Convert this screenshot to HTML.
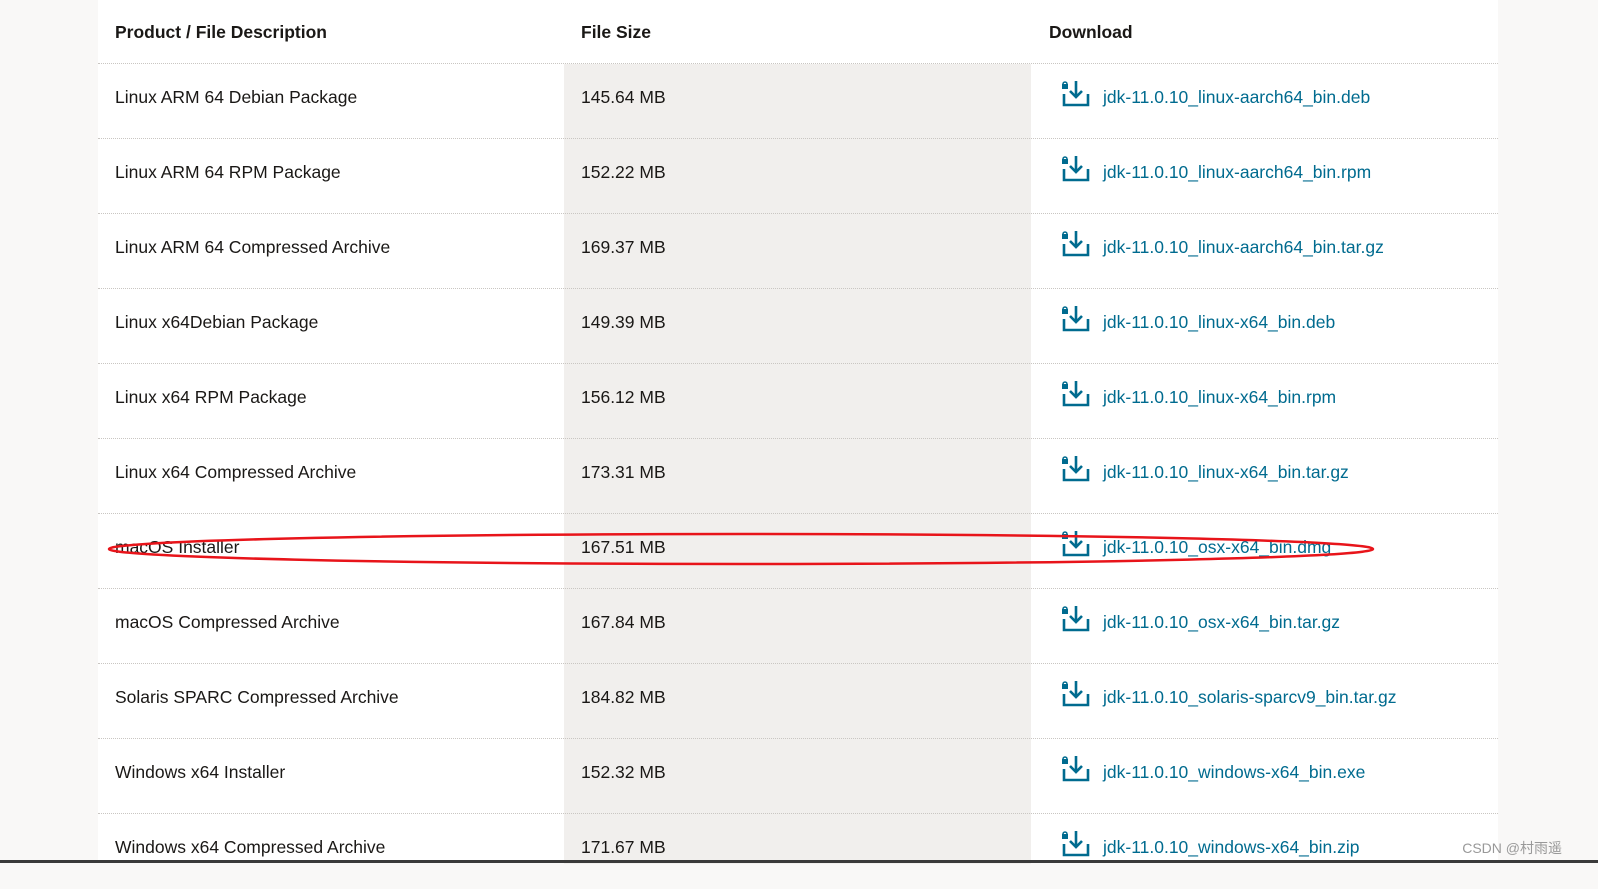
<!DOCTYPE html>
<html><head><meta charset="utf-8"><style>
body{margin:0;width:1598px;height:863px;overflow:hidden;background:#f9f8f7;font-family:"Liberation Sans","Noto Sans CJK SC",sans-serif;position:relative}
.tbl{position:absolute;left:98px;top:0;width:1400px;height:863px;background:#fff}
.mid{position:absolute;left:564px;top:64px;width:467px;height:800px;background:#f1efed}
.hdr{position:absolute;top:1px;height:63px;line-height:63px;font-weight:bold;font-size:17.5px;color:#1a1816}
.row{position:absolute;left:98px;width:1400px;height:75px;border-top:1px dotted #c9c6c2}
.row span{position:absolute;top:2px;line-height:62px;font-size:17.5px;color:#1a1816}
.row .a{left:17px}.row .b{left:483px}
.row .c{left:1005px;color:#006b8f}
.row svg{position:absolute;left:963px;top:16px}
.bar{position:absolute;left:0;top:860px;width:1598px;height:3px;background:#3a3a3a}
.wm{position:absolute;right:36px;top:838px;font-size:14px;color:#999}
</style></head><body>
<div class="tbl"></div><div class="mid"></div>
<div class="hdr" style="left:115px">Product / File Description</div>
<div class="hdr" style="left:581px">File Size</div>
<div class="hdr" style="left:1049px">Download</div>
<div class="row" style="top:63px"><span class="a">Linux ARM 64 Debian Package</span><span class="b">145.64 MB</span><svg width="30" height="30" viewBox="0 0 30 30"><rect x="1" y="4" width="6" height="5" fill="#006b8f"/><path d="M2 4a2 2 0 0 1 4 0" stroke="#006b8f" stroke-width="1.5" fill="none"/><path d="M3 14v11h24v-11M15 1v16M9 11l6 6 6-6" stroke="#006b8f" stroke-width="2.6" fill="none"/></svg><span class="c">jdk-11.0.10_linux-aarch64_bin.deb</span></div>
<div class="row" style="top:138px"><span class="a">Linux ARM 64 RPM Package</span><span class="b">152.22 MB</span><svg width="30" height="30" viewBox="0 0 30 30"><rect x="1" y="4" width="6" height="5" fill="#006b8f"/><path d="M2 4a2 2 0 0 1 4 0" stroke="#006b8f" stroke-width="1.5" fill="none"/><path d="M3 14v11h24v-11M15 1v16M9 11l6 6 6-6" stroke="#006b8f" stroke-width="2.6" fill="none"/></svg><span class="c">jdk-11.0.10_linux-aarch64_bin.rpm</span></div>
<div class="row" style="top:213px"><span class="a">Linux ARM 64 Compressed Archive</span><span class="b">169.37 MB</span><svg width="30" height="30" viewBox="0 0 30 30"><rect x="1" y="4" width="6" height="5" fill="#006b8f"/><path d="M2 4a2 2 0 0 1 4 0" stroke="#006b8f" stroke-width="1.5" fill="none"/><path d="M3 14v11h24v-11M15 1v16M9 11l6 6 6-6" stroke="#006b8f" stroke-width="2.6" fill="none"/></svg><span class="c">jdk-11.0.10_linux-aarch64_bin.tar.gz</span></div>
<div class="row" style="top:288px"><span class="a">Linux x64Debian Package</span><span class="b">149.39 MB</span><svg width="30" height="30" viewBox="0 0 30 30"><rect x="1" y="4" width="6" height="5" fill="#006b8f"/><path d="M2 4a2 2 0 0 1 4 0" stroke="#006b8f" stroke-width="1.5" fill="none"/><path d="M3 14v11h24v-11M15 1v16M9 11l6 6 6-6" stroke="#006b8f" stroke-width="2.6" fill="none"/></svg><span class="c">jdk-11.0.10_linux-x64_bin.deb</span></div>
<div class="row" style="top:363px"><span class="a">Linux x64 RPM Package</span><span class="b">156.12 MB</span><svg width="30" height="30" viewBox="0 0 30 30"><rect x="1" y="4" width="6" height="5" fill="#006b8f"/><path d="M2 4a2 2 0 0 1 4 0" stroke="#006b8f" stroke-width="1.5" fill="none"/><path d="M3 14v11h24v-11M15 1v16M9 11l6 6 6-6" stroke="#006b8f" stroke-width="2.6" fill="none"/></svg><span class="c">jdk-11.0.10_linux-x64_bin.rpm</span></div>
<div class="row" style="top:438px"><span class="a">Linux x64 Compressed Archive</span><span class="b">173.31 MB</span><svg width="30" height="30" viewBox="0 0 30 30"><rect x="1" y="4" width="6" height="5" fill="#006b8f"/><path d="M2 4a2 2 0 0 1 4 0" stroke="#006b8f" stroke-width="1.5" fill="none"/><path d="M3 14v11h24v-11M15 1v16M9 11l6 6 6-6" stroke="#006b8f" stroke-width="2.6" fill="none"/></svg><span class="c">jdk-11.0.10_linux-x64_bin.tar.gz</span></div>
<div class="row" style="top:513px"><span class="a">macOS Installer</span><span class="b">167.51 MB</span><svg width="30" height="30" viewBox="0 0 30 30"><rect x="1" y="4" width="6" height="5" fill="#006b8f"/><path d="M2 4a2 2 0 0 1 4 0" stroke="#006b8f" stroke-width="1.5" fill="none"/><path d="M3 14v11h24v-11M15 1v16M9 11l6 6 6-6" stroke="#006b8f" stroke-width="2.6" fill="none"/></svg><span class="c">jdk-11.0.10_osx-x64_bin.dmg</span></div>
<div class="row" style="top:588px"><span class="a">macOS Compressed Archive</span><span class="b">167.84 MB</span><svg width="30" height="30" viewBox="0 0 30 30"><rect x="1" y="4" width="6" height="5" fill="#006b8f"/><path d="M2 4a2 2 0 0 1 4 0" stroke="#006b8f" stroke-width="1.5" fill="none"/><path d="M3 14v11h24v-11M15 1v16M9 11l6 6 6-6" stroke="#006b8f" stroke-width="2.6" fill="none"/></svg><span class="c">jdk-11.0.10_osx-x64_bin.tar.gz</span></div>
<div class="row" style="top:663px"><span class="a">Solaris SPARC Compressed Archive</span><span class="b">184.82 MB</span><svg width="30" height="30" viewBox="0 0 30 30"><rect x="1" y="4" width="6" height="5" fill="#006b8f"/><path d="M2 4a2 2 0 0 1 4 0" stroke="#006b8f" stroke-width="1.5" fill="none"/><path d="M3 14v11h24v-11M15 1v16M9 11l6 6 6-6" stroke="#006b8f" stroke-width="2.6" fill="none"/></svg><span class="c">jdk-11.0.10_solaris-sparcv9_bin.tar.gz</span></div>
<div class="row" style="top:738px"><span class="a">Windows x64 Installer</span><span class="b">152.32 MB</span><svg width="30" height="30" viewBox="0 0 30 30"><rect x="1" y="4" width="6" height="5" fill="#006b8f"/><path d="M2 4a2 2 0 0 1 4 0" stroke="#006b8f" stroke-width="1.5" fill="none"/><path d="M3 14v11h24v-11M15 1v16M9 11l6 6 6-6" stroke="#006b8f" stroke-width="2.6" fill="none"/></svg><span class="c">jdk-11.0.10_windows-x64_bin.exe</span></div>
<div class="row" style="top:813px"><span class="a">Windows x64 Compressed Archive</span><span class="b">171.67 MB</span><svg width="30" height="30" viewBox="0 0 30 30"><rect x="1" y="4" width="6" height="5" fill="#006b8f"/><path d="M2 4a2 2 0 0 1 4 0" stroke="#006b8f" stroke-width="1.5" fill="none"/><path d="M3 14v11h24v-11M15 1v16M9 11l6 6 6-6" stroke="#006b8f" stroke-width="2.6" fill="none"/></svg><span class="c">jdk-11.0.10_windows-x64_bin.zip</span></div>
<svg style="position:absolute;left:0;top:0" width="1598" height="863"><ellipse cx="741" cy="549" rx="632" ry="15" fill="none" stroke="#e8141a" stroke-width="2.5"/></svg>
<div class="wm">CSDN @村雨遥</div>
<div class="bar"></div>
</body></html>
